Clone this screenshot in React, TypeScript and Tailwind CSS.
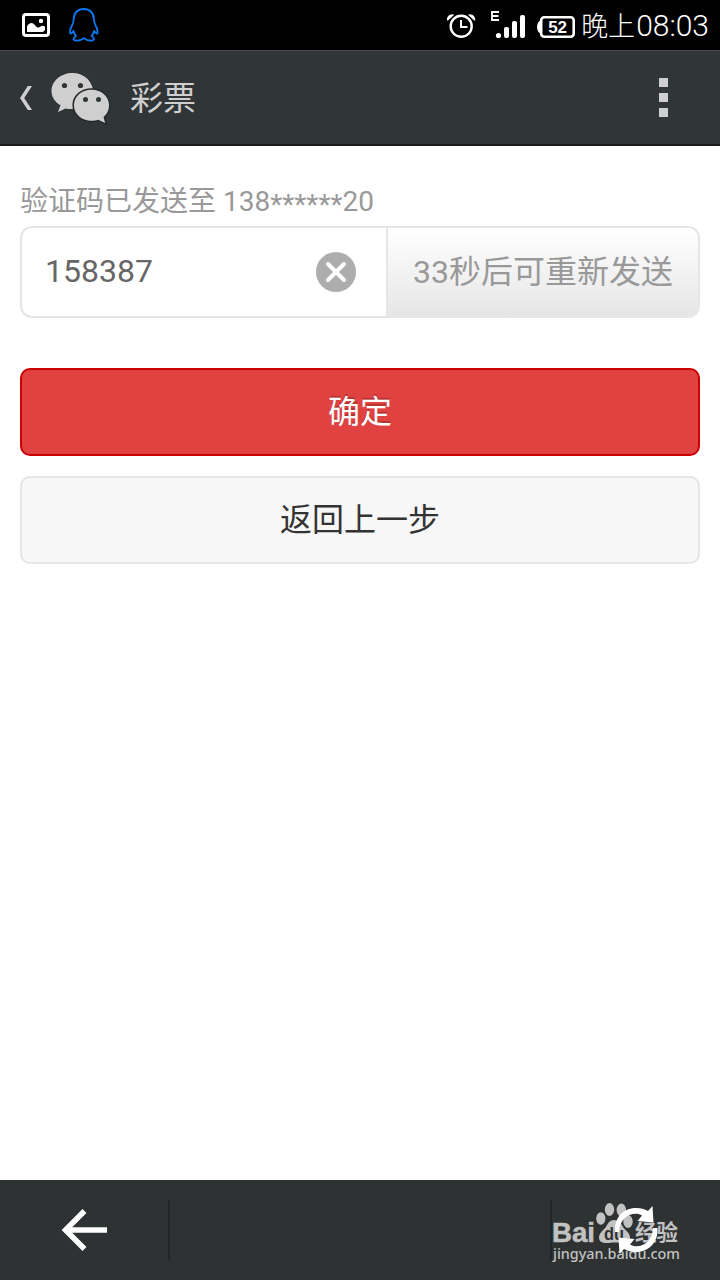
import { useState } from 'react';

function StatusBar() {
  return (
    <div className="flex h-[50px] items-center justify-between bg-black pl-[22px] pr-[11px] text-white">
      <div className="flex h-full items-center">
        <svg className="h-[50px] w-[80px]" viewBox="22 0 80 50" fill="none">
          <rect x="23.5" y="14.5" width="25" height="21" rx="2.5" stroke="#fff" strokeWidth="3" />
          <path
            d="M27 32V26.500c1.200-2.800 4.200-4.500 6.500-2.800 2 1.500 2.800 3.800 4.800 3.800 1.600 0 2.600-2 4.700-1.800l2 .8V30l-2 2z"
            fill="#fff"
          />
          <circle cx="41" cy="21" r="2.200" fill="#fff" />
          <path
            d="M83.700 9c-6 0-10 4-10 10 0 3-.5 4-1.700 6.500-1.600 3-2.600 5-1.700 8 .8.4 2.200-1.300 3.200-2.500.4 2 1.200 3.700 2.500 5-1.300.8-2.700 1.800-2.500 3.300 1.500 1.800 7 1.700 9.200-.8h2.200c2.200 2.500 7.700 2.600 9.200.8.200-1.500-1.200-2.500-2.500-3.300 1.300-1.300 2.100-3 2.500-5 1 1.200 2.400 2.900 3.200 2.500.9-3-.1-5-1.700-8-1.200-2.500-1.700-3.500-1.700-6.500 0-6-4.200-10-10.200-10z"
            stroke="#0a78f5"
            strokeWidth="1.800"
            strokeLinejoin="round"
          />
        </svg>
      </div>
      <div className="flex h-full items-center">
        <svg className="h-[50px] w-[135px]" viewBox="446 0 135 50" fill="none">
          <circle cx="461.200" cy="26.300" r="10.500" stroke="#fff" strokeWidth="2.400" />
          <path d="M461 20v7h6.500" stroke="#fff" strokeWidth="2" />
          <path d="M447 20.500c-.5-3.500 2-6.500 6-6.300l1 .8-6 5.500zM475.200 20.500c.5-3.500-2-6.500-6-6.300l-1 .8 6 5.500z" fill="#fff" />
          <path d="M499 12H492v8h7M492 16h6.500" stroke="#fff" strokeWidth="1.800" />
          <circle cx="498.500" cy="35.500" r="2.600" fill="#fff" />
          <rect x="504" y="27" width="5" height="11" rx="2" fill="#fff" />
          <rect x="512" y="21" width="5" height="17" rx="2" fill="#fff" />
          <rect x="520" y="15" width="5" height="23" rx="2" fill="#fff" />
          <path d="M541 21h-1.500c-1.500 1-2.500 3.500-2.500 6s1 5 2.500 6h1.500z" fill="#fff" />
          <rect x="541.200" y="17.200" width="32.500" height="19.500" rx="3" stroke="#fff" strokeWidth="2.600" />
          <text x="557.600" y="33" textAnchor="middle" fill="#fff" fontSize="17" fontWeight="700" fontFamily="Liberation Sans, sans-serif">
            52
          </text>
        </svg>
        <span className="mr-px pt-1 text-[27px] leading-none font-light">晚上</span>
        <span className="pt-px font-[Roboto] text-[30px] font-light leading-none">08:03</span>
      </div>
    </div>
  );
}

function Header() {
  return (
    <header className="flex h-24 items-center border-t border-b-2 border-t-[#484c4e] border-b-[#1e1b1e] bg-[#303538] pl-[18px] pr-[52px]">
      <svg className="h-[54px] w-[94px]" viewBox="18 71 94 54" fill="none">
        <path d="M27.800 86h4.200l-7.800 12 7.800 12h-4.200l-7.800-12z" fill="#cfcfcf" />
        <path
          d="M72.500 73C61 73 51.500 81 51.500 91c0 6 3.200 10.800 9 14.300L58 112l7.500-3.600c2.800.6 5 .9 8 .6 3 0 19-8 19.500-20C90.500 79 82.500 73 72.500 73z"
          fill="#cfcfcf"
        />
        <path
          d="M91.500 89.800c-10 0-17.500 6.700-17.500 15.500 0 8.900 7.500 15.500 17.500 15.500 2.500 0 4.500-.4 6.700-1l7 3.200-1.700-6c3.800-3 5.500-7 5.500-11.700 0-8.800-7.500-15.500-17.500-15.500z"
          fill="#cfcfcf"
          stroke="#272b2d"
          strokeWidth="3.200"
          paintOrder="stroke"
        />
        <g fill="#303538">
          <circle cx="64.500" cy="85.500" r="2.600" />
          <circle cx="80.500" cy="85.500" r="2.600" />
          <circle cx="85.500" cy="99.500" r="2.500" />
          <circle cx="98.500" cy="99.500" r="2.500" />
        </g>
      </svg>
      <h1 className="ml-[18px] pt-0.5 text-[33px] leading-none text-[#cfcfcf]">彩票</h1>
      <div className="ml-auto flex flex-col gap-1.5">
        <span className="size-[9px] bg-[#cfcfcf]" />
        <span className="size-[9px] bg-[#cfcfcf]" />
        <span className="size-[9px] bg-[#cfcfcf]" />
      </div>
    </header>
  );
}

function CodeField() {
  const [code, setCode] = useState('158387');

  return (
    <div className="flex h-[92px] overflow-hidden rounded-xl border-2 border-[#e6e6e6]">
      <div className="flex w-[364px] items-center pl-[23px] pr-[30px]">
        <input
          className="min-w-0 flex-1 pb-0.5 text-[32px] leading-none text-[#666] outline-none"
          value={code}
          onChange={(e) => setCode(e.target.value)}
        />
        <button onClick={() => setCode('')}>
          <svg className="size-10" viewBox="0 0 40 40">
            <circle cx="20" cy="20" r="20" fill="#adadad" />
            <path d="M12 12l16 16M28 12L12 28" stroke="#fff" strokeWidth="4" strokeLinecap="round" />
          </svg>
        </button>
      </div>
      <button className="flex-1 border-l-2 border-[#e6e6e6] bg-linear-to-b from-white to-[#e6e6e6] text-[32px] leading-none whitespace-nowrap text-[#999]">
        33秒后可重新发送
      </button>
    </div>
  );
}

function Watermark() {
  return (
    <svg className="absolute top-0 right-0 h-[100px] w-[190px]" viewBox="530 1180 190 100">
      <g fill="#c2c2c2">
        <ellipse cx="600.800" cy="1218.500" rx="4.600" ry="6.200" />
        <ellipse cx="609.500" cy="1209.500" rx="4.700" ry="6.500" />
        <ellipse cx="621.300" cy="1210" rx="4.700" ry="6.500" />
        <ellipse cx="628" cy="1221.500" rx="4.700" ry="6.500" />
        <path d="M614 1220c4 0 7 3 9 7 3 4 7 6 7 10.500 0 5-4 6-9 5.500-5-.6-8-.4-12 0-6 .6-10-1-10-5.500 0-4 4-7 7-10.500 2-4 4-7 8-7z" />
        <text x="552" y="1242" fontSize="28" fontWeight="700" fontFamily="Liberation Sans, sans-serif" stroke="#c2c2c2" strokeWidth=".5" textLength="43" lengthAdjust="spacingAndGlyphs">
          Bai
        </text>
        <text x="635" y="1240" fontSize="22" fontWeight="700" fontFamily="Noto Sans CJK SC, sans-serif" textLength="43" lengthAdjust="spacingAndGlyphs">
          经验
        </text>
        <text x="553" y="1259" fontSize="15" fontWeight="500" fontFamily="Noto Sans, sans-serif" textLength="127" lengthAdjust="spacingAndGlyphs">
          jingyan.baidu.com
        </text>
      </g>
      <text x="604" y="1240" fontSize="18" fontWeight="700" fontFamily="Liberation Sans, sans-serif" fill="#2e3233" textLength="20" lengthAdjust="spacingAndGlyphs">
        du
      </text>
    </svg>
  );
}

function BottomBar() {
  return (
    <footer className="relative flex h-[100px] items-center bg-[#2e3233]">
      <button className="flex h-[60px] w-[170px] items-center justify-center border-r-2 border-[#232627]">
        <svg className="size-[46px]" viewBox="0 0 46 46" fill="none" stroke="#fff" strokeWidth="5.500">
          <path d="M23.500 4L4.500 23l19 19M5 23h41" />
        </svg>
      </button>
      <div className="flex-1" />
      <Watermark />
      <button className="relative flex h-[60px] w-[170px] items-center justify-center border-l-2 border-[#232627]">
        <svg className="h-[50px] w-[46px]" viewBox="613 1205 46 50" fill="#fff">
          <path d="M615 1232C614 1218 623 1208 636 1208c5 0 8.500 1 12 3l4.500-5 1 16.500-16-1.500 4.500-5.500c-2-1.200-4-1.800-6-1.800-9.500 0-16.500 7-17 18.300z" />
          <path d="M657.500 1228c1 14-8.500 24-21.500 24-5 0-8.500-1-12-3l-4.500 5-1-16.500 16 1.500-4.500 5.500c2 1.200 4 1.800 6 1.800 9.500 0 16.500-7 17-18.300z" />
        </svg>
      </button>
    </footer>
  );
}

export default function App() {
  return (
    <div className="flex h-[1280px] w-[720px] flex-col bg-white font-[Roboto,'Noto_Sans_CJK_SC',sans-serif]">
      <StatusBar />
      <Header />
      <main className="flex flex-1 flex-col px-5 pt-[42px]">
        <p className="mb-2.5 text-[28px] leading-7 text-[#999]">
          验证码已发送至 138<span className="inline-block translate-y-[3px]">******</span>20
        </p>
        <CodeField />
        <button className="mt-[50px] h-[88px] rounded-[10px] border-2 border-[#c00] bg-[#e04241] text-[32px] leading-none text-white [text-shadow:0_-2px_0_rgba(0,0,0,0.2)]">
          确定
        </button>
        <button className="mt-5 h-[88px] rounded-[10px] border-2 border-[#e6e6e6] bg-[#f7f7f7] text-[32px] leading-none text-[#333]">
          返回上一步
        </button>
      </main>
      <BottomBar />
    </div>
  );
}
